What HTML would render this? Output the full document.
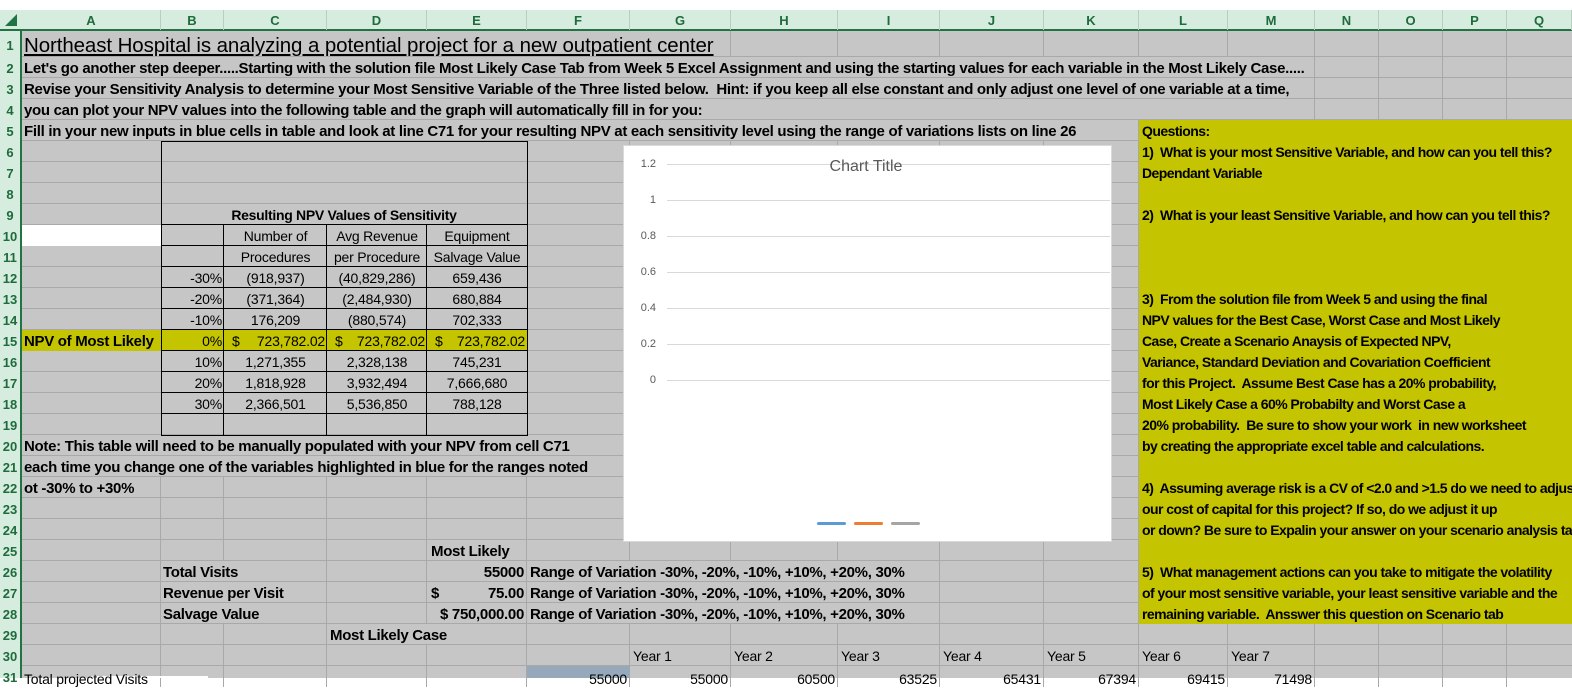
<!DOCTYPE html>
<html><head><meta charset="utf-8"><style>
body{margin:0;width:1572px;height:678px;overflow:hidden;background:#fff;position:relative;font-family:"Liberation Sans",sans-serif}
div{position:absolute;box-sizing:border-box}
.t{height:21px;line-height:23px;white-space:nowrap;font-weight:bold;font-size:15px;letter-spacing:-0.3px;color:#000}
.q{font-size:14px;letter-spacing:-0.55px}
.n{font-weight:normal;font-size:14px;letter-spacing:-0.2px}
.r{text-align:right}
.ce{text-align:center}
.hl{height:1px;background:#a9a9a9}
.vl{width:1px;background:#a9a9a9}
.bk{background:#000}
.ch{top:10px;height:20px;line-height:21px;text-align:center;font-weight:bold;font-size:13px;color:#1e6b3c;border-right:1px solid #b7cfc0}
.rn{left:0;width:20px;height:21px;line-height:23px;text-align:center;font-weight:bold;font-size:13px;color:#1e6b3c}
.yl{left:648px;width:8px;text-align:right;font-size:11px;color:#595959;line-height:12px;height:12px}
.gl{left:667px;width:443px;height:1px;background:#d9d9d9}
</style></head><body>
<div style="left:0;top:0;width:1572px;height:10px;background:#fff"></div>
<div style="left:0;top:10px;width:1572px;height:20px;background:#d6ecdf"></div>
<div style="left:0;top:29px;width:1572px;height:2px;background:#217346"></div>
<div style="left:0;top:31px;width:20px;height:647px;background:#d6ecdf"></div>
<div style="left:20px;top:31px;width:2px;height:647px;background:#217346"></div>
<div style="left:22px;top:31px;width:1550px;height:647px;background:#c6c6c6"></div>
<svg style="position:absolute;left:4px;top:13px" width="14" height="14"><polygon points="13,1 13,13 1,13" fill="#217346"/></svg>
<div id="grid"></div>

<div class="ch" style="left:22px;width:139px">A</div>
<div class="ch" style="left:161px;width:63px">B</div>
<div class="ch" style="left:224px;width:103px">C</div>
<div class="ch" style="left:327px;width:100px">D</div>
<div class="ch" style="left:427px;width:100px">E</div>
<div class="ch" style="left:527px;width:103px">F</div>
<div class="ch" style="left:630px;width:101px">G</div>
<div class="ch" style="left:731px;width:107px">H</div>
<div class="ch" style="left:838px;width:102px">I</div>
<div class="ch" style="left:940px;width:104px">J</div>
<div class="ch" style="left:1044px;width:95px">K</div>
<div class="ch" style="left:1139px;width:89px">L</div>
<div class="ch" style="left:1228px;width:87px">M</div>
<div class="ch" style="left:1315px;width:64px">N</div>
<div class="ch" style="left:1379px;width:64px">O</div>
<div class="ch" style="left:1443px;width:64px">P</div>
<div class="ch" style="left:1507px;width:65px">Q</div>

<div class="rn" style="top:34px">1</div>
<div class="rn" style="top:57px">2</div><div class="rn" style="top:78px">3</div><div class="rn" style="top:99px">4</div>
<div class="rn" style="top:120px">5</div><div class="rn" style="top:141px">6</div><div class="rn" style="top:162px">7</div>
<div class="rn" style="top:183px">8</div><div class="rn" style="top:204px">9</div><div class="rn" style="top:225px">10</div>
<div class="rn" style="top:246px">11</div><div class="rn" style="top:267px">12</div><div class="rn" style="top:288px">13</div>
<div class="rn" style="top:309px">14</div><div class="rn" style="top:330px">15</div><div class="rn" style="top:351px">16</div>
<div class="rn" style="top:372px">17</div><div class="rn" style="top:393px">18</div><div class="rn" style="top:414px">19</div>
<div class="rn" style="top:435px">20</div><div class="rn" style="top:456px">21</div><div class="rn" style="top:477px">22</div>
<div class="rn" style="top:498px">23</div><div class="rn" style="top:519px">24</div><div class="rn" style="top:540px">25</div>
<div class="rn" style="top:561px">26</div><div class="rn" style="top:582px">27</div><div class="rn" style="top:603px">28</div>
<div class="rn" style="top:624px">29</div><div class="rn" style="top:645px">30</div><div class="rn" style="top:666px">31</div>

<div style="left:22px;top:225px;width:139px;height:21px;background:#fff"></div>
<div style="left:22px;top:330px;width:505px;height:21px;background:#c4c400"></div>
<div style="left:1139px;top:120px;width:433px;height:504px;background:#c4c400"></div>
<div style="left:527px;top:666px;width:103px;height:12px;background:#96a9ba"></div>
<div style="left:90px;top:676px;width:118px;height:2px;background:#fff"></div>

<div style="left:161px;top:141px;width:367px;height:295px;border:1px solid #000"></div>
<div id="box"></div>

<div class="t" style="left:24px;top:33px;height:24px;line-height:26px;font-size:20.5px;font-weight:normal;letter-spacing:-0.1px;text-decoration:underline">Northeast Hospital is analyzing a potential project for a new outpatient center</div>
<div class="t" style="left:24px;top:57px">Let's go another step deeper.....Starting with the solution file Most Likely Case Tab from Week 5 Excel Assignment and using the starting values for each variable in the Most Likely Case.....</div>
<div class="t" style="left:24px;top:78px">Revise your Sensitivity Analysis to determine your Most Sensitive Variable of the Three listed below.&nbsp; Hint: if you keep all else constant and only adjust one level of one variable at a time,</div>
<div class="t" style="left:24px;top:99px">you can plot your NPV values into the following table and the graph will automatically fill in for you:</div>
<div class="t" style="left:24px;top:120px">Fill in your new inputs in blue cells in table and look at line C71 for your resulting NPV at each sensitivity level using the range of variations lists on line 26</div>

<div class="t ce" style="left:161px;width:366px;top:204px;font-size:14px">Resulting NPV Values of Sensitivity</div>
<div class="t n ce" style="left:224px;width:103px;top:225px">Number of</div>
<div class="t n ce" style="left:327px;width:100px;top:225px">Avg Revenue</div>
<div class="t n ce" style="left:427px;width:100px;top:225px">Equipment</div>
<div class="t n ce" style="left:224px;width:103px;top:246px">Procedures</div>
<div class="t n ce" style="left:327px;width:100px;top:246px">per Procedure</div>
<div class="t n ce" style="left:427px;width:100px;top:246px">Salvage Value</div>

<div class="t n r" style="left:161px;width:61px;top:267px">-30%</div>
<div class="t n r" style="left:161px;width:61px;top:288px">-20%</div>
<div class="t n r" style="left:161px;width:61px;top:309px">-10%</div>
<div class="t n r" style="left:161px;width:61px;top:330px">0%</div>
<div class="t n r" style="left:161px;width:61px;top:351px">10%</div>
<div class="t n r" style="left:161px;width:61px;top:372px">20%</div>
<div class="t n r" style="left:161px;width:61px;top:393px">30%</div>

<div class="t n ce" style="left:224px;width:103px;top:267px">(918,937)</div>
<div class="t n ce" style="left:224px;width:103px;top:288px">(371,364)</div>
<div class="t n ce" style="left:224px;width:103px;top:309px">176,209</div>
<div class="t n ce" style="left:224px;width:103px;top:351px">1,271,355</div>
<div class="t n ce" style="left:224px;width:103px;top:372px">1,818,928</div>
<div class="t n ce" style="left:224px;width:103px;top:393px">2,366,501</div>
<div class="t n ce" style="left:327px;width:100px;top:267px">(40,829,286)</div>
<div class="t n ce" style="left:327px;width:100px;top:288px">(2,484,930)</div>
<div class="t n ce" style="left:327px;width:100px;top:309px">(880,574)</div>
<div class="t n ce" style="left:327px;width:100px;top:351px">2,328,138</div>
<div class="t n ce" style="left:327px;width:100px;top:372px">3,932,494</div>
<div class="t n ce" style="left:327px;width:100px;top:393px">5,536,850</div>
<div class="t n ce" style="left:427px;width:100px;top:267px">659,436</div>
<div class="t n ce" style="left:427px;width:100px;top:288px">680,884</div>
<div class="t n ce" style="left:427px;width:100px;top:309px">702,333</div>
<div class="t n ce" style="left:427px;width:100px;top:351px">745,231</div>
<div class="t n ce" style="left:427px;width:100px;top:372px">7,666,680</div>
<div class="t n ce" style="left:427px;width:100px;top:393px">788,128</div>

<div class="t" style="left:24px;top:330px">NPV of Most Likely</div>
<div class="t n" style="left:232px;top:330px">$</div><div class="t n r" style="left:240px;width:85px;top:330px">723,782.02</div>
<div class="t n" style="left:335px;top:330px">$</div><div class="t n r" style="left:340px;width:85px;top:330px">723,782.02</div>
<div class="t n" style="left:435px;top:330px">$</div><div class="t n r" style="left:440px;width:85px;top:330px">723,782.02</div>

<div class="t" style="left:24px;top:435px">Note: This table will need to be manually populated with your NPV from cell C71</div>
<div class="t" style="left:24px;top:456px">each time you change one of the variables highlighted in blue for the ranges noted</div>
<div class="t" style="left:24px;top:477px">ot -30% to +30%</div>

<div class="t" style="left:431px;top:540px">Most Likely</div>
<div class="t" style="left:163px;top:561px">Total Visits</div>
<div class="t" style="left:163px;top:582px">Revenue per Visit</div>
<div class="t" style="left:163px;top:603px">Salvage Value</div>
<div class="t r" style="left:427px;width:97px;top:561px">55000</div>
<div class="t" style="left:431px;top:582px">$</div><div class="t r" style="left:427px;width:97px;top:582px">75.00</div>
<div class="t r" style="left:427px;width:97px;top:603px">$ 750,000.00</div>
<div class="t" style="left:530px;top:561px">Range of Variation -30%, -20%, -10%, +10%, +20%, 30%</div>
<div class="t" style="left:530px;top:582px">Range of Variation -30%, -20%, -10%, +10%, +20%, 30%</div>
<div class="t" style="left:530px;top:603px">Range of Variation -30%, -20%, -10%, +10%, +20%, 30%</div>
<div class="t" style="left:330px;top:624px">Most Likely Case</div>

<div class="t n" style="left:633px;top:645px">Year 1</div>
<div class="t n" style="left:734px;top:645px">Year 2</div>
<div class="t n" style="left:841px;top:645px">Year 3</div>
<div class="t n" style="left:943px;top:645px">Year 4</div>
<div class="t n" style="left:1047px;top:645px">Year 5</div>
<div class="t n" style="left:1142px;top:645px">Year 6</div>
<div class="t n" style="left:1231px;top:645px">Year 7</div>

<div class="t n" style="left:24px;top:668px">Total projected Visits</div>
<div class="t n r" style="left:527px;width:100px;top:668px">55000</div>
<div class="t n r" style="left:630px;width:98px;top:668px">55000</div>
<div class="t n r" style="left:731px;width:104px;top:668px">60500</div>
<div class="t n r" style="left:838px;width:99px;top:668px">63525</div>
<div class="t n r" style="left:940px;width:101px;top:668px">65431</div>
<div class="t n r" style="left:1044px;width:92px;top:668px">67394</div>
<div class="t n r" style="left:1139px;width:86px;top:668px">69415</div>
<div class="t n r" style="left:1228px;width:84px;top:668px">71498</div>

<div class="t q" style="left:1142px;top:120px">Questions:</div>
<div class="t q" style="left:1142px;top:141px">1)&nbsp; What is your most Sensitive Variable, and how can you tell this?</div>
<div class="t q" style="left:1142px;top:162px">Dependant Variable</div>
<div class="t q" style="left:1142px;top:204px">2)&nbsp; What is your least Sensitive Variable, and how can you tell this?</div>
<div class="t q" style="left:1142px;top:288px">3)&nbsp; From the solution file from Week 5 and using the final</div>
<div class="t q" style="left:1142px;top:309px">NPV values for the Best Case, Worst Case and Most Likely</div>
<div class="t q" style="left:1142px;top:330px">Case, Create a Scenario Anaysis of Expected NPV,</div>
<div class="t q" style="left:1142px;top:351px">Variance, Standard Deviation and Covariation Coefficient</div>
<div class="t q" style="left:1142px;top:372px">for this Project.&nbsp; Assume Best Case has a 20% probability,</div>
<div class="t q" style="left:1142px;top:393px">Most Likely Case a 60% Probabilty and Worst Case a</div>
<div class="t q" style="left:1142px;top:414px">20% probability.&nbsp; Be sure to show your work&nbsp; in new worksheet</div>
<div class="t q" style="left:1142px;top:435px">by creating the appropriate excel table and calculations.</div>
<div class="t q" style="left:1142px;top:477px">4)&nbsp; Assuming average risk is a CV of &lt;2.0 and &gt;1.5 do we need to adjust</div>
<div class="t q" style="left:1142px;top:498px">our cost of capital for this project? If so, do we adjust it up</div>
<div class="t q" style="left:1142px;top:519px">or down? Be sure to Expalin your answer on your scenario analysis tab</div>
<div class="t q" style="left:1142px;top:561px">5)&nbsp; What management actions can you take to mitigate the volatility</div>
<div class="t q" style="left:1142px;top:582px">of your most sensitive variable, your least sensitive variable and the</div>
<div class="t q" style="left:1142px;top:603px">remaining variable.&nbsp; Ansswer this question on Scenario tab</div>

<div style="left:623px;top:145px;width:489px;height:397px;background:#fff;border:1px solid #d9d9d9"></div>
<div class="gl" style="top:164px"></div><div class="gl" style="top:200px"></div><div class="gl" style="top:236px"></div>
<div class="gl" style="top:272px"></div><div class="gl" style="top:308px"></div><div class="gl" style="top:344px"></div>
<div class="gl" style="top:380px"></div>
<div class="yl" style="left:630px;width:26px;top:158px">1.2</div>
<div class="yl" style="left:630px;width:26px;top:194px">1</div>
<div class="yl" style="left:630px;width:26px;top:230px">0.8</div>
<div class="yl" style="left:630px;width:26px;top:266px">0.6</div>
<div class="yl" style="left:630px;width:26px;top:302px">0.4</div>
<div class="yl" style="left:630px;width:26px;top:338px">0.2</div>
<div class="yl" style="left:630px;width:26px;top:374px">0</div>
<div style="left:766px;top:157px;width:200px;text-align:center;font-size:16px;color:#595959;line-height:20px">Chart Title</div>
<div style="left:817px;top:522px;width:29px;height:3px;border-radius:2px;background:#5b9bd5"></div>
<div style="left:854px;top:522px;width:29px;height:3px;border-radius:2px;background:#ed7d31"></div>
<div style="left:891px;top:522px;width:29px;height:3px;border-radius:2px;background:#a5a5a5"></div>

<script>
(function(){
var C=[161,224,327,427,527,630,731,838,940,1044,1139,1228,1315,1379,1443,1507];
function top(n){return n==1?31:57+(n-2)*21;}
var g=document.getElementById('grid'),h='';
for(var r=1;r<=31;r++){
  var y=top(r+1)-1;
  if(y<678)h+='<div class="hl" style="left:22px;top:'+y+'px;width:1550px"></div>';
  for(var i=0;i<C.length;i++){
    var x=C[i],s=false;
    if(r==1&&x<715)s=true;
    if(r>=2&&r<=4&&x<1300)s=true;
    if(r==5&&x<1085)s=true;
    if(r>=6&&r<=19&&x>=161&&x<=527)s=true;
    if((r==20||r==21)&&x<600)s=true;
    if(r>=26&&r<=28&&(x==224||(x>=630&&x<=838)))s=true;
    if(r==29&&x==427)s=true;
    if(!s)h+='<div class="vl" style="left:'+(x-1)+'px;top:'+top(r)+'px;height:'+(top(r+1)-top(r))+'px"></div>';
  }
}
g.innerHTML=h;
var b=document.getElementById('box'),k='';
for(var r=10;r<=19;r++){k+='<div class="bk" style="left:161px;top:'+(top(r)-1)+'px;width:367px;height:1px"></div>';}
[224,327,427].forEach(function(x){k+='<div class="bk" style="left:'+(x-1)+'px;top:224px;width:1px;height:211px"></div>';});
b.innerHTML=k;
})();
</script>
</body></html>
